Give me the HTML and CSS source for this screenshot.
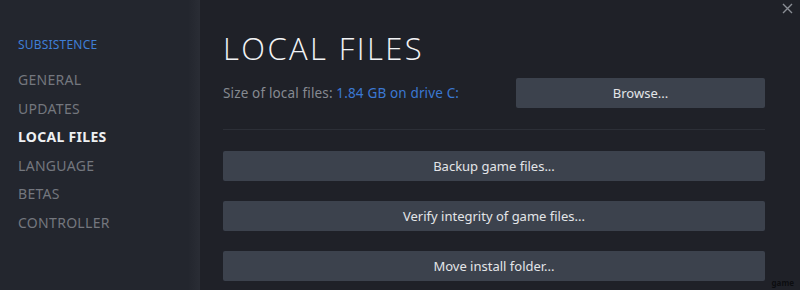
FILE: index.html
```html
<!DOCTYPE html>
<html lang="en">

<head>
    <meta charset="UTF-8">
    <title>Properties - Local Files</title>
    <link rel="stylesheet" href="styles.css">
</head>

<body>
    <div class="window">
        <nav class="sidebar">
            <div class="game-title">SUBSISTENCE</div>
            <a class="nav-item">GENERAL</a>
            <a class="nav-item">UPDATES</a>
            <a class="nav-item active">LOCAL FILES</a>
            <a class="nav-item">LANGUAGE</a>
            <a class="nav-item">BETAS</a>
            <a class="nav-item">CONTROLLER</a>
        </nav>

        <main class="content">
            <h1>LOCAL FILES</h1>
            <div class="size-row">
                <div class="size-text">Size of local files: <span class="size-value">1.84 GB on drive C:</span></div>
                <button class="btn btn-browse">Browse...</button>
            </div>
            <div class="divider"></div>
            <div class="actions">
                <button class="btn">Backup game files...</button>
                <button class="btn">Verify integrity of game files...</button>
                <button class="btn">Move install folder...</button>
            </div>
        </main>

        <button class="close" aria-label="Close">
            <svg width="11" height="11" viewBox="0 0 11 11">
                <path d="M1 1 L10 10 M10 1 L1 10" stroke="#8a8e95" stroke-width="1.4" fill="none" />
            </svg>
        </button>
        <div class="watermark">game</div>
    </div>
</body>

</html>
```

FILE: styles.css
```css
/* General styles */
body {
    margin: 0;
    padding: 0;
    background: #1f2128;
    font-family: 'Noto Sans', 'Liberation Sans', sans-serif;
}

.window {
    position: relative;
    display: flex;
    width: 800px;
    height: 290px;
    overflow: hidden;
    background: #1f2128;
}

/* Sidebar */
.sidebar {
    width: 200px;
    flex-shrink: 0;
    box-sizing: border-box;
    padding: 36px 0 0 18px;
    background: linear-gradient(90deg, #23262e 0%, #23262e 94%, #2a2d35 100%);
    display: flex;
    flex-direction: column;
}

.game-title {
    font-size: 12px;
    color: #3f7ed6;
    letter-spacing: 0.2px;
    margin-bottom: 13px;
}

.nav-item {
    font-size: 14px;
    color: #74777e;
    line-height: 28.6px;
    letter-spacing: 0.3px;
}

.nav-item.active {
    color: #eef0f2;
    font-weight: 700;
}

/* Main content */
.content {
    flex: 1;
    box-sizing: border-box;
    padding: 28px 35px 0 23px;
}

h1 {
    margin: 0;
    font-family: 'Open Sans', 'Noto Sans', sans-serif;
    font-weight: 300;
    font-size: 31px;
    letter-spacing: 2.4px;
    color: #f2f3f5;
    line-height: 40px;
}

.size-row {
    display: flex;
    justify-content: space-between;
    align-items: center;
    margin-top: 10px;
}

.size-text {
    font-size: 13.5px;
    letter-spacing: 0.15px;
    color: #868a91;
}

.size-value {
    color: #3b78d2;
}

.btn {
    display: block;
    width: 100%;
    height: 30px;
    border: none;
    border-radius: 2px;
    background: #3c424d;
    color: #e3e5e8;
    font-family: 'Noto Sans', 'Liberation Sans', sans-serif;
    font-size: 13px;
    padding: 0;
}

.btn-browse {
    width: 249px;
}

.divider {
    height: 1px;
    background: #2c2f37;
    margin: 21px 0 21px;
}

.actions {
    display: flex;
    flex-direction: column;
    gap: 20px;
}

/* Overlays */
.close {
    position: absolute;
    top: 2px;
    right: 7px;
    border: none;
    background: none;
    padding: 0;
}

.watermark {
    position: absolute;
    right: 6px;
    bottom: 2px;
    font-size: 8px;
    color: #0c0d10;
    font-weight: 700;
}
```
